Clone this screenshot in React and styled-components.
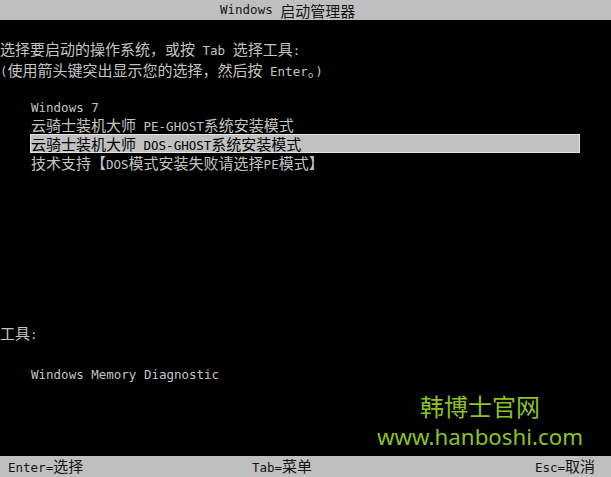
import React from 'react';
import styled, { createGlobalStyle } from 'styled-components';

const Global = createGlobalStyle`
  html, body { margin: 0; padding: 0; background: #000; }
  body { width: 611px; height: 477px; overflow: hidden; }
`;

const Screen = styled.div`
  position: relative;
  width: 611px;
  height: 477px;
  background: #000;
  display: flex;
  flex-direction: column;
  font-family: "Noto Sans CJK SC", sans-serif;
  font-size: 15px;
  color: #c4c4c4;
`;

const Lat = styled.span`
  font-family: "DejaVu Sans Mono", "Liberation Mono", monospace;
  font-size: 12.5px;
  white-space: pre;
`;

const Bar = styled.div`
  flex: none;
  height: ${(p) => p.$h}px;
  background: #bfbfbf;
  color: #141414;
  display: flex;
  align-items: center;
  line-height: 1;
  padding: 0 16px 0 ${(p) => p.$pl}px;
`;

const FooterItem = styled.div`
  width: ${(p) => (p.$w ? `${p.$w}px` : 'auto')};
  margin-left: ${(p) => (p.$push ? 'auto' : '0')};
`;

const Main = styled.div`
  flex: 1;
  padding-top: 18px;
  display: flex;
  flex-direction: column;
`;

const Prompt = styled.div`
  line-height: 21px;
  height: 21px;
  white-space: pre;
`;

const List = styled.div`
  margin: ${(p) => p.$mt}px 0 0 30px;
  width: 550px;
  display: flex;
  flex-direction: column;
`;

const Item = styled.div`
  height: 19px;
  line-height: 19px;
  padding-left: 1px;
  white-space: pre;
  background: ${(p) => (p.$sel ? '#c0c0c0' : 'transparent')};
  color: ${(p) => (p.$sel ? '#000' : 'inherit')};
  box-shadow: ${(p) => (p.$sel ? 'inset 0 0 0 1px #e4e4e4' : 'none')};
`;

const Label = styled.div`
  margin-top: ${(p) => p.$mt}px;
  line-height: 19px;
  height: 19px;
  white-space: pre;
`;

const Watermark = styled.div`
  position: absolute;
  left: 372px;
  top: 390px;
  width: 216px;
  text-align: center;
  color: #8dc21f;
  font-family: "Noto Sans", "Noto Sans CJK SC", sans-serif;
`;

const WmTitle = styled.div`
  font-family: "Noto Sans CJK SC", sans-serif;
  font-size: 24px;
  line-height: 32px;
  letter-spacing: 0px;
`;

const WmUrl = styled.div`
  font-size: 22.3px;
  line-height: 30px;
`;

function T({ children }) {
  const parts = String(children).split(/([\x20-\x7e]+)/).filter(Boolean);
  return parts.map((p, i) =>
    /^[\x20-\x7e]+$/.test(p) ? <Lat key={i}>{p}</Lat> : <React.Fragment key={i}>{p}</React.Fragment>
  );
}

const entries = [
  'Windows 7',
  '云骑士装机大师 PE-GHOST系统安装模式',
  '云骑士装机大师 DOS-GHOST系统安装模式',
  '技术支持【DOS模式安装失败请选择PE模式】',
];

export default function App() {
  return (
    <>
      <Global />
      <Screen>
        <Bar $h={20} $pl={220}>
          <T>Windows 启动管理器</T>
        </Bar>
        <Main>
          <Prompt><T>选择要启动的操作系统，或按 Tab 选择工具:</T></Prompt>
          <Prompt><T>(使用箭头键突出显示您的选择，然后按 Enter。)</T></Prompt>
          <List $mt={16}>
            {entries.map((e, i) => (
              <Item key={i} $sel={i === 2}><T>{e}</T></Item>
            ))}
          </List>
          <Label $mt={151}><T>工具:</T></Label>
          <List $mt={21}>
            <Item><T>Windows Memory Diagnostic</T></Item>
          </List>
        </Main>
        <Bar $h={21} $pl={8}>
          <FooterItem $w={244}><T>Enter=选择</T></FooterItem>
          <FooterItem><T>Tab=菜单</T></FooterItem>
          <FooterItem $push><T>Esc=取消</T></FooterItem>
        </Bar>
        <Watermark>
          <WmTitle>韩博士官网</WmTitle>
          <WmUrl>www.hanboshi.com</WmUrl>
        </Watermark>
      </Screen>
    </>
  );
}
